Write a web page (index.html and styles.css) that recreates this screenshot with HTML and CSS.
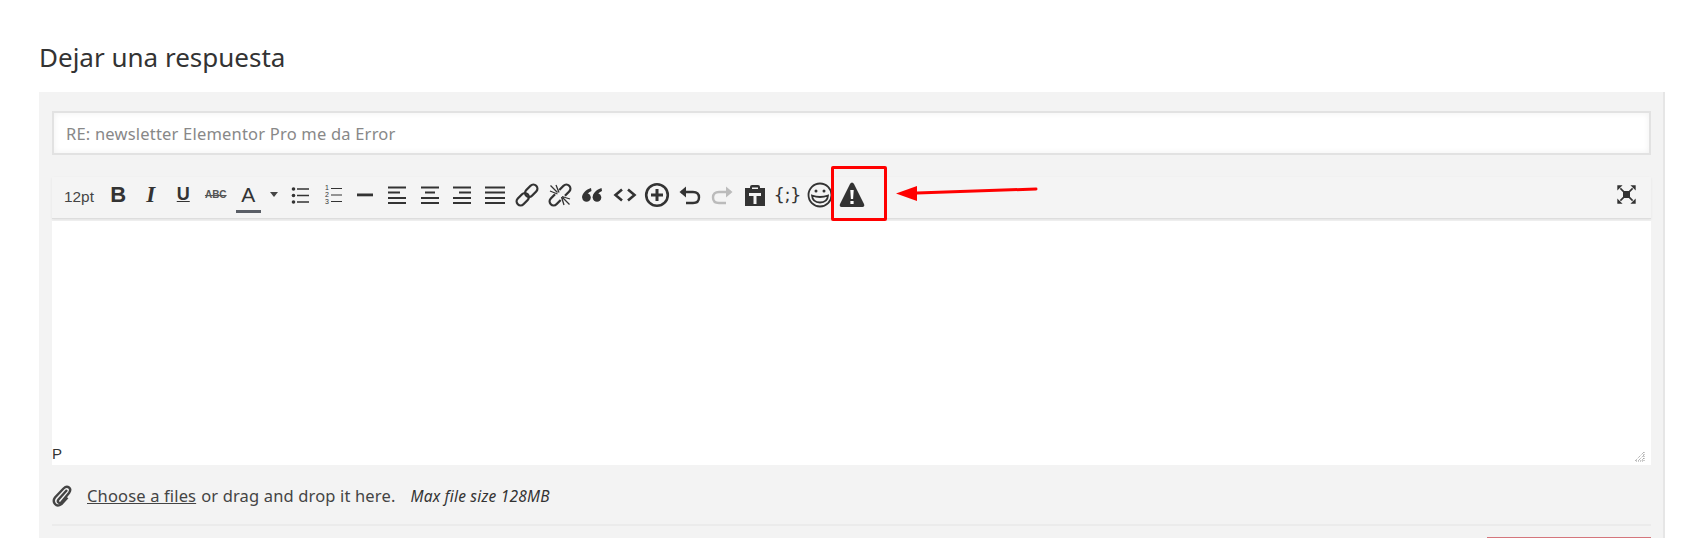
FILE: index.html
```html
<!DOCTYPE html>
<html lang="es">
<head>
  <meta charset="UTF-8">
  <title>Dejar una respuesta</title>
  <link rel="stylesheet" href="styles.css">
</head>
<body>
  <h3 class="reply-title">Dejar una respuesta</h3>

  <div class="reply-panel">
    <input class="subject" type="text" value="RE: newsletter Elementor Pro me da Error">

    <div class="toolbar">
      <span class="tb-size">12pt</span>
      <span class="tb-btn tb-b">B</span>
      <span class="tb-btn tb-i">I</span>
      <span class="tb-btn tb-u">U</span>
      <span class="tb-btn tb-s">ABC</span>
      <span class="tb-btn"><span class="tb-color">A</span></span>
      <span class="tb-caret"></span>
      <span class="tb-btn"><svg viewBox="0 0 24 24"><g fill="#333"><circle cx="5.5" cy="6" r="1.800"/><circle cx="5.5" cy="12.500" r="1.800"/><circle cx="5.500" cy="19" r="1.800"/></g><path d="M9 6h12M9 12.500h12M9 19h12" stroke="#333" stroke-width="1.400"/></svg></span>
      <span class="tb-btn"><svg viewBox="0 0 24 24"><g fill="#333" font-size="7" font-family="Liberation Sans"><text x="5" y="7">1</text><text x="5" y="14">2</text><text x="5" y="21">3</text></g><path d="M11 5.500h11M11 12h11M11 18.500h11" stroke="#333" stroke-width="1.200"/></svg></span>
      <span class="tb-btn"><svg viewBox="0 0 24 24"><rect x="4" y="10.500" width="16" height="2.800" fill="#333"/></svg></span>
      <span class="tb-btn"><svg viewBox="0 0 24 24"><path d="M3 4.500h18M3 9.500h12M3 15h18M3 20h18" stroke="#333" stroke-width="2"/></svg></span>
      <span class="tb-btn"><svg viewBox="0 0 24 24"><path d="M3 4.500h18M7 9.500h10M3 15h18M3 20h18" stroke="#333" stroke-width="2"/></svg></span>
      <span class="tb-btn"><svg viewBox="0 0 24 24"><path d="M3 4.500h18M9 9.500h12M3 15h18M3 20h18" stroke="#333" stroke-width="2"/></svg></span>
      <span class="tb-btn"><svg viewBox="0 0 24 24"><path d="M2 4.500h20M2 9.500h20M2 15h20M2 20h20" stroke="#333" stroke-width="2"/></svg></span>
      <span class="tb-btn"><svg viewBox="0 0 24 24"><g fill="none" stroke="#333" stroke-width="2.300" transform="rotate(-45 12 12)"><rect x="-1" y="8" width="14" height="8" rx="4"/><rect x="11" y="8" width="14" height="8" rx="4"/></g></svg></span>
      <span class="tb-btn"><svg viewBox="0 0 24 24"><g fill="none" stroke="#333" stroke-width="2.300" transform="rotate(-45 12 12)"><path d="M9 8H3a4 4 0 0 0 0 8h6"/><path d="M15 8h6a4 4 0 0 1 0 8h-6"/></g><path d="M2.500 2.500l7 7M21.500 21.500l-7-7M8 2l3 7.500M22 16l-8-2.500M2 8l7.500 3M16 22l-2.500-8" stroke="#333" stroke-width="1.300"/></svg></span>
      <span class="tb-btn"><svg viewBox="0 0 24 24"><g fill="#333"><circle cx="6.500" cy="14.500" r="4.300"/><circle cx="17" cy="14.500" r="4.300"/><path d="M11 5C6 6.500 2.200 10 2.200 14.500h4C6.500 11.500 8 9.500 11.500 8zM21.500 5C16.500 6.500 12.700 10 12.700 14.500h4c.3-3 1.800-5 5.300-6.500z"/></g></svg></span>
      <span class="tb-btn"><svg viewBox="0 0 24 24"><path d="M9 6.500L2.500 12 9 17.500M15 6.500l6.500 5.500-6.500 5.500" fill="none" stroke="#333" stroke-width="2.600"/></svg></span>
      <span class="tb-btn"><svg class="tb-big" viewBox="0 0 26 26"><circle cx="13" cy="13" r="10.800" fill="none" stroke="#333" stroke-width="2.600"/><path d="M13 7v12M7 13h12" stroke="#333" stroke-width="3"/></svg></span>
      <span class="tb-btn"><svg viewBox="0 0 24 24"><path d="M3 9h12q6 0 6 5.500T15 20H8" fill="none" stroke="#333" stroke-width="2.400"/><path d="M8 3.500L1.500 9 8 14.500z" fill="#333"/></svg></span>
      <span class="tb-btn"><svg viewBox="0 0 24 24"><path d="M21 9H9q-6 0-6 5.500T9 20h7" fill="none" stroke="#bbb" stroke-width="2.400"/><path d="M16 3.500L22.500 9 16 14.500z" fill="#bbb"/></svg></span>
      <span class="tb-btn"><svg viewBox="0 0 24 24"><path d="M2 5h5V4q0-2 2-2h6q2 0 2 2v1h5v18H2z" fill="#333"/><path d="M9 4.500h6v1.500H9zM6 10h12v3h-4.500v8h-3v-8H6z" fill="#f4f4f4"/></svg></span>
      <span class="tb-btn tb-code">{;}</span>
      <span class="tb-btn"><svg class="tb-big" viewBox="0 0 26 26"><circle cx="13" cy="13" r="11.500" fill="none" stroke="#333" stroke-width="1.800"/><circle cx="9" cy="9" r="1.500" fill="#333"/><circle cx="17" cy="9" r="1.500" fill="#333"/><path d="M5 13.500q8 3 16 0-.5 7-8 7t-8-7z" fill="none" stroke="#333" stroke-width="1.800"/></svg></span>
      <span class="tb-btn"><svg class="tb-big" viewBox="0 0 26 26"><path d="M13 .5q1.200 0 2 1.500l10 20q1 2.500-1.500 3h-21Q0 24.500 1 22L11 2q.8-1.500 2-1.500z" fill="#333"/><path d="M11.300 8h3.400l-.6 9h-2.200zM11.400 19h3.200v3h-3.200z" fill="#fff"/></svg></span>
      <span class="tb-btn tb-full"><svg viewBox="0 0 24 24"><rect x="8" y="8" width="8" height="8" fill="#333"/><path d="M5 5l14 14M19 5L5 19" stroke="#333" stroke-width="1.800"/><path d="M1.500 1.500h6l-6 6zM22.500 1.500h-6l6 6zM1.500 22.500h6l-6-6zM22.500 22.500h-6l6-6z" fill="#333"/></svg></span>
    </div>

    <div class="editor">
      <span class="editor-path">P</span>
      <svg class="resize-grip" viewBox="0 0 11 11"><path d="M10 1v9H1zM10 4L4 10M10 7l-3 3" fill="none" stroke="#999" stroke-width="1" stroke-dasharray="1 1"/></svg>
    </div>

    <div class="upload-row">
      <svg class="clip" viewBox="0 0 20 22"><path d="M15 5l-8.500 9.500q-1.500 2 0 3t3-.5l7.500-9q2.500-3.500 0-5.500t-5.500 1L3 12.500q-2.500 3.500 0 6.500t6.500 0l6-6.500" fill="none" stroke="#444" stroke-width="2.400"/></svg>
      <a class="upload-link" href="#">Choose a files</a>
      <span>or drag and drop it here.</span>
      <em class="upload-max">Max file size 128MB</em>
    </div>

    <div class="panel-rule"></div>
    <div class="submit-row"><button class="submit-btn"></button></div>
  </div>

  <!-- anotacion roja de la captura -->
  <div class="mark-box"></div>
  <svg class="mark-arrow" viewBox="0 0 145 24"><path d="M143 6L24 10" stroke="#f00" stroke-width="3" stroke-linecap="round"/><path d="M3 10.500L24 3v15z" fill="#f00"/></svg>
</body>
</html>
```

FILE: styles.css
```css
* { box-sizing: border-box; }
html, body {
  height: 538px;
  overflow: hidden;
}
body {
  margin: 0;
  padding: 0 38px 0 39px;
  background: #fff;
  color: #333;
  font-family: 'Noto Sans', sans-serif;
  position: relative;
}
.reply-title {
  margin: 0;
  padding: 40px 0 0 0;
  height: 92px;
  font-size: 26px;
  line-height: 34px;
  font-weight: normal;
  color: #333;
}
.reply-panel {
  background: #f3f3f3;
  border-right: 2px solid #e6e6e6;
  padding: 19px 12px 0 13px;
  height: 446px;
  overflow: hidden;
}
.subject {
  display: block;
  width: 100%;
  height: 44px;
  padding: 1px 12px 0;
  border: 2px solid #e2e2e2;
  background: #fff;
  box-shadow: inset 0 0 6px #f0f0f0;
  font-family: 'Noto Sans', sans-serif;
  font-size: 16.500px;
  letter-spacing: 0.2px;
  color: #888;
  outline: none;
}
.toolbar {
  display: flex;
  align-items: center;
  height: 42px;
  margin-top: 22px;
  padding-bottom: 6px;
  padding-right: 8px;
  background: #f4f4f4;
  border-bottom: 1px solid #ddd;
  box-shadow: 0 1px 2px #e4e4e4;
}
.tb-size {
  width: 50px;
  padding-left: 12px;
  font-family: 'Liberation Sans', sans-serif;
  font-size: 15.400px;
  color: #444;
  padding-top: 4px;
}
.tb-btn {
  display: flex;
  align-items: center;
  justify-content: center;
  width: 32.500px;
  height: 32px;
  color: #333;
  font-family: 'Liberation Sans', sans-serif;
}
.tb-btn svg {
  width: 24px;
  height: 24px;
  overflow: visible;
}
.tb-btn .tb-big {
  width: 26px;
  height: 26px;
  flex: none;
}
.tb-b { font-size: 22px; font-weight: bold; }
.tb-i { font-family: 'Liberation Serif', serif; font-size: 23px; font-weight: bold; font-style: italic; }
.tb-u { font-size: 18px; font-weight: bold; text-decoration: underline; }
.tb-s { font-size: 10px; font-weight: bold; text-decoration: line-through; color: #555; }
.tb-color {
  display: block;
  width: 25px;
  margin-top: 7px;
  padding-bottom: 4px;
  border-bottom: 3px solid #5a5e66;
  text-align: center;
  font-size: 21px;
  line-height: 23px;
}
.tb-caret {
  width: 19px;
  display: flex;
  justify-content: center;
}
.tb-caret::before {
  content: "";
  border-top: 5px solid #444;
  border-left: 4.500px solid transparent;
  border-right: 4.500px solid transparent;
}
.tb-code {
  font-family: 'DejaVu Sans', sans-serif;
  font-size: 18px;
  letter-spacing: -0.5px;
}
.tb-full { margin-left: auto; }
.tb-full svg { width: 21px; height: 21px; }
.editor {
  position: relative;
  display: flex;
  align-items: flex-end;
  height: 244px;
  margin-top: 2px;
  background: #fff;
}
.editor-path {
  font-family: 'Liberation Sans', sans-serif;
  font-size: 15px;
  line-height: 16px;
  padding: 0 0 3px 0;
  color: #333;
}
.resize-grip {
  position: absolute;
  right: 6px;
  bottom: 3px;
  width: 11px;
  height: 11px;
}
.upload-row {
  display: flex;
  align-items: center;
  gap: 5px;
  height: 59px;
  font-size: 16.500px;
  letter-spacing: 0.15px;
  color: #444;
  padding-top: 2px;
}
.clip {
  width: 20px;
  height: 22px;
  margin-right: 10px;
  flex: none;
}
.upload-link {
  color: #444;
  text-decoration: underline;
}
.upload-max {
  margin-left: 10px;
  font-size: 15.500px;
  letter-spacing: 0.2px;
  color: #333;
}
.panel-rule {
  height: 2px;
  background: #ebebeb;
}
.submit-row {
  display: flex;
  justify-content: flex-end;
  margin-top: 11px;
}
.submit-btn {
  width: 164px;
  height: 40px;
  border: none;
  background: #d4767c;
}
.mark-box {
  position: absolute;
  left: 831px;
  top: 166px;
  width: 56px;
  height: 55px;
  border: 3px solid #f00;
  border-radius: 2px;
}
.mark-arrow {
  position: absolute;
  left: 893px;
  top: 183px;
  width: 145px;
  height: 24px;
}
```
